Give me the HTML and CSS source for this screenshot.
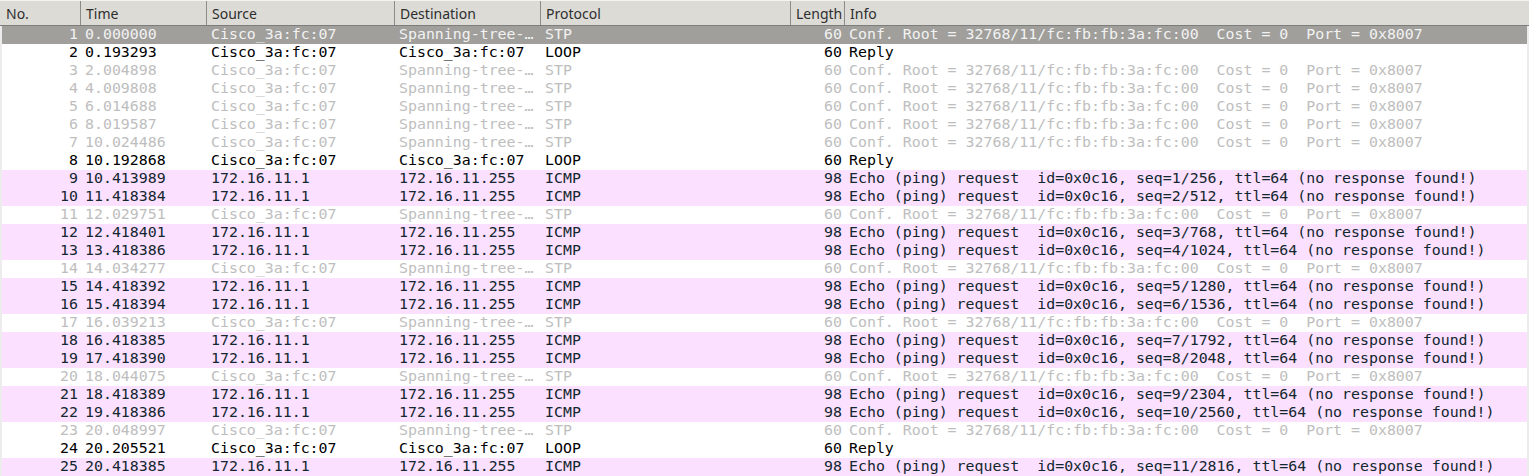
FILE: index.html
```html
<!DOCTYPE html>
<html>
<head>
<meta charset="utf-8">
<link rel="stylesheet" href="styles.css">
</head>
<body>
<div class="packets">
  <div class="head">
    <div class="hc">No.</div>
    <div class="hc">Time</div>
    <div class="hc">Source</div>
    <div class="hc">Destination</div>
    <div class="hc">Protocol</div>
    <div class="hc">Length</div>
    <div class="hc last">Info</div>
  </div>
  <div class="body">
    <div class="row sel"><span class="no">1</span><span>0.000000</span><span>Cisco_3a:fc:07</span><span>Spanning-tree-…</span><span>STP</span><span class="len">60</span><span>Conf. Root = 32768/11/fc:fb:fb:3a:fc:00  Cost = 0  Port = 0x8007</span></div>
    <div class="row loop"><span class="no">2</span><span>0.193293</span><span>Cisco_3a:fc:07</span><span>Cisco_3a:fc:07</span><span>LOOP</span><span class="len">60</span><span>Reply</span></div>
    <div class="row stp"><span class="no">3</span><span>2.004898</span><span>Cisco_3a:fc:07</span><span>Spanning-tree-…</span><span>STP</span><span class="len">60</span><span>Conf. Root = 32768/11/fc:fb:fb:3a:fc:00  Cost = 0  Port = 0x8007</span></div>
    <div class="row stp"><span class="no">4</span><span>4.009808</span><span>Cisco_3a:fc:07</span><span>Spanning-tree-…</span><span>STP</span><span class="len">60</span><span>Conf. Root = 32768/11/fc:fb:fb:3a:fc:00  Cost = 0  Port = 0x8007</span></div>
    <div class="row stp"><span class="no">5</span><span>6.014688</span><span>Cisco_3a:fc:07</span><span>Spanning-tree-…</span><span>STP</span><span class="len">60</span><span>Conf. Root = 32768/11/fc:fb:fb:3a:fc:00  Cost = 0  Port = 0x8007</span></div>
    <div class="row stp"><span class="no">6</span><span>8.019587</span><span>Cisco_3a:fc:07</span><span>Spanning-tree-…</span><span>STP</span><span class="len">60</span><span>Conf. Root = 32768/11/fc:fb:fb:3a:fc:00  Cost = 0  Port = 0x8007</span></div>
    <div class="row stp"><span class="no">7</span><span>10.024486</span><span>Cisco_3a:fc:07</span><span>Spanning-tree-…</span><span>STP</span><span class="len">60</span><span>Conf. Root = 32768/11/fc:fb:fb:3a:fc:00  Cost = 0  Port = 0x8007</span></div>
    <div class="row loop"><span class="no">8</span><span>10.192868</span><span>Cisco_3a:fc:07</span><span>Cisco_3a:fc:07</span><span>LOOP</span><span class="len">60</span><span>Reply</span></div>
    <div class="row icmp"><span class="no">9</span><span>10.413989</span><span>172.16.11.1</span><span>172.16.11.255</span><span>ICMP</span><span class="len">98</span><span>Echo (ping) request  id=0x0c16, seq=1/256, ttl=64 (no response found!)</span></div>
    <div class="row icmp"><span class="no">10</span><span>11.418384</span><span>172.16.11.1</span><span>172.16.11.255</span><span>ICMP</span><span class="len">98</span><span>Echo (ping) request  id=0x0c16, seq=2/512, ttl=64 (no response found!)</span></div>
    <div class="row stp"><span class="no">11</span><span>12.029751</span><span>Cisco_3a:fc:07</span><span>Spanning-tree-…</span><span>STP</span><span class="len">60</span><span>Conf. Root = 32768/11/fc:fb:fb:3a:fc:00  Cost = 0  Port = 0x8007</span></div>
    <div class="row icmp"><span class="no">12</span><span>12.418401</span><span>172.16.11.1</span><span>172.16.11.255</span><span>ICMP</span><span class="len">98</span><span>Echo (ping) request  id=0x0c16, seq=3/768, ttl=64 (no response found!)</span></div>
    <div class="row icmp"><span class="no">13</span><span>13.418386</span><span>172.16.11.1</span><span>172.16.11.255</span><span>ICMP</span><span class="len">98</span><span>Echo (ping) request  id=0x0c16, seq=4/1024, ttl=64 (no response found!)</span></div>
    <div class="row stp"><span class="no">14</span><span>14.034277</span><span>Cisco_3a:fc:07</span><span>Spanning-tree-…</span><span>STP</span><span class="len">60</span><span>Conf. Root = 32768/11/fc:fb:fb:3a:fc:00  Cost = 0  Port = 0x8007</span></div>
    <div class="row icmp"><span class="no">15</span><span>14.418392</span><span>172.16.11.1</span><span>172.16.11.255</span><span>ICMP</span><span class="len">98</span><span>Echo (ping) request  id=0x0c16, seq=5/1280, ttl=64 (no response found!)</span></div>
    <div class="row icmp"><span class="no">16</span><span>15.418394</span><span>172.16.11.1</span><span>172.16.11.255</span><span>ICMP</span><span class="len">98</span><span>Echo (ping) request  id=0x0c16, seq=6/1536, ttl=64 (no response found!)</span></div>
    <div class="row stp"><span class="no">17</span><span>16.039213</span><span>Cisco_3a:fc:07</span><span>Spanning-tree-…</span><span>STP</span><span class="len">60</span><span>Conf. Root = 32768/11/fc:fb:fb:3a:fc:00  Cost = 0  Port = 0x8007</span></div>
    <div class="row icmp"><span class="no">18</span><span>16.418385</span><span>172.16.11.1</span><span>172.16.11.255</span><span>ICMP</span><span class="len">98</span><span>Echo (ping) request  id=0x0c16, seq=7/1792, ttl=64 (no response found!)</span></div>
    <div class="row icmp"><span class="no">19</span><span>17.418390</span><span>172.16.11.1</span><span>172.16.11.255</span><span>ICMP</span><span class="len">98</span><span>Echo (ping) request  id=0x0c16, seq=8/2048, ttl=64 (no response found!)</span></div>
    <div class="row stp"><span class="no">20</span><span>18.044075</span><span>Cisco_3a:fc:07</span><span>Spanning-tree-…</span><span>STP</span><span class="len">60</span><span>Conf. Root = 32768/11/fc:fb:fb:3a:fc:00  Cost = 0  Port = 0x8007</span></div>
    <div class="row icmp"><span class="no">21</span><span>18.418389</span><span>172.16.11.1</span><span>172.16.11.255</span><span>ICMP</span><span class="len">98</span><span>Echo (ping) request  id=0x0c16, seq=9/2304, ttl=64 (no response found!)</span></div>
    <div class="row icmp"><span class="no">22</span><span>19.418386</span><span>172.16.11.1</span><span>172.16.11.255</span><span>ICMP</span><span class="len">98</span><span>Echo (ping) request  id=0x0c16, seq=10/2560, ttl=64 (no response found!)</span></div>
    <div class="row stp"><span class="no">23</span><span>20.048997</span><span>Cisco_3a:fc:07</span><span>Spanning-tree-…</span><span>STP</span><span class="len">60</span><span>Conf. Root = 32768/11/fc:fb:fb:3a:fc:00  Cost = 0  Port = 0x8007</span></div>
    <div class="row loop"><span class="no">24</span><span>20.205521</span><span>Cisco_3a:fc:07</span><span>Cisco_3a:fc:07</span><span>LOOP</span><span class="len">60</span><span>Reply</span></div>
    <div class="row icmp"><span class="no">25</span><span>20.418385</span><span>172.16.11.1</span><span>172.16.11.255</span><span>ICMP</span><span class="len">98</span><span>Echo (ping) request  id=0x0c16, seq=11/2816, ttl=64 (no response found!)</span></div>
  </div>
</div>
</body>
</html>
```
FILE: styles.css
```css
html, body {
  margin: 0;
  padding: 0;
  background: #ffffff;
  overflow: hidden;
}

.packets {
  width: 1529px;
  height: 476px;
  overflow: hidden;
}

.head {
  display: grid;
  grid-template-columns: 81px 126px 188px 146px 250px 54px 1fr;
  background: #dcdbd6;
  border-top: 1px solid #f4f3f0;
  border-bottom: 1px solid #7d7d7b;
  box-sizing: border-box;
  height: 26px;
}

.hc {
  font-family: "Noto Sans", "DejaVu Sans", sans-serif;
  font-size: 14px;
  line-height: 25px;
  color: #2e2e2e;
  padding-left: 5px;
  border-right: 1px solid #8c8c8a;
  white-space: nowrap;
  overflow: hidden;
}

.hc:first-child {
  padding-left: 6px;
}

.hc.last {
  border-right: none;
}

.body {
  background: #ececec;
  padding: 0 2px;
}

.row {
  display: grid;
  grid-template-columns: 79px 126px 188px 146px 250px 54px 1fr;
  height: 18px;
  font-family: "DejaVu Sans Mono", monospace;
  font-size: 14.9px;
  line-height: 15px;
  padding-top: 1px;
  padding-bottom: 2px;
  box-sizing: border-box;
  background: #ffffff;
  color: #000000;
  white-space: pre;
}

.row span {
  padding-left: 4px;
}

.row span.no {
  text-align: right;
  padding-left: 0;
  padding-right: 3px;
}

.row span.len {
  text-align: right;
  padding-left: 0;
  padding-right: 3px;
}

.row.sel {
  background: #a09f9b;
  color: #f2f2f2;
}

.row.stp {
  color: #bebebe;
}

.row.icmp {
  background: #fce0ff;
  color: #12272e;
}
```
